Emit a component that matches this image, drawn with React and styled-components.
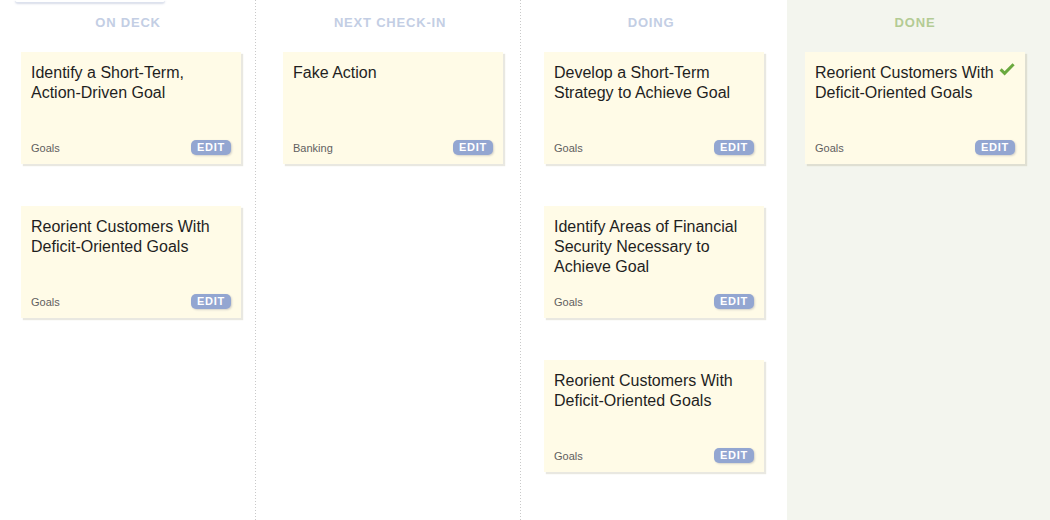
import React from "react";
import styled, { createGlobalStyle } from "styled-components";

const GlobalStyle = createGlobalStyle`
  html, body {
    margin: 0;
    padding: 0;
    background: #fff;
    font-family: "Liberation Sans", Arial, sans-serif;
  }
`;

const Board = styled.div`
  position: relative;
  display: grid;
  grid-template-columns: 256px 265px 266px 1fr;
  height: 100vh;
  min-height: 520px;
  overflow: hidden;
`;

// bottom edge of a control that sits just above the visible area
const TopStub = styled.div`
  position: absolute;
  top: 0;
  left: 15px;
  width: 150px;
  height: 2px;
  background: #fff;
  border-bottom: 1px solid #dde2ee;
  border-radius: 0 0 7px 7px;
  box-shadow: 0 1px 2px rgba(140, 155, 190, 0.35);
`;

const Column = styled.section`
  display: flex;
  flex-direction: column;
  padding-left: ${(p) => p.$inset}px;
  background-color: ${(p) => (p.$done ? "#f3f5ee" : "transparent")};

  ${(p) =>
    p.$divider &&
    `
    background-image: linear-gradient(#c9c9c9 34%, transparent 0);
    background-size: 1px 3px;
    background-position: right top;
    background-repeat: repeat-y;
  `}
`;

const Heading = styled.h3`
  width: ${(p) => (p.$done ? 220 : 214)}px;
  margin: 15px 0 21px;
  font-size: 13px;
  line-height: 16px;
  font-weight: 700;
  letter-spacing: 0.8px;
  text-align: center;
  color: ${(p) => (p.$done ? "#b3cb94" : "#c3cee4")};
`;

const CardList = styled.div`
  display: flex;
  flex-direction: column;
  gap: 42px;
`;

const Card = styled.article`
  box-sizing: border-box;
  width: 220px;
  height: 112px;
  padding: 11px 10px 9px;
  display: flex;
  flex-direction: column;
  justify-content: space-between;
  background: #fffbe7;
  box-shadow: 2px 2px 1px rgba(120, 110, 70, 0.16);
`;

const Title = styled.div`
  font-size: 16px;
  line-height: 20px;
  color: #1f1f1f;
`;

const Check = styled.svg`
  float: right;
  width: 16px;
  height: 14px;
  margin: -1px 0 0 4px;
`;

const Footer = styled.div`
  display: flex;
  align-items: center;
  justify-content: space-between;
`;

const Category = styled.span`
  font-size: 11px;
  color: #5f5f5f;
`;

const EditButton = styled.button`
  width: 40px;
  height: 15px;
  padding: 0;
  border: 0;
  border-radius: 5px;
  background: #93a6d1;
  color: #fff;
  font-family: "Liberation Sans", Arial, sans-serif;
  font-size: 11px;
  line-height: 15px;
  font-weight: 700;
  letter-spacing: 0.7px;
  box-shadow: 1px 1px 2px rgba(60, 70, 100, 0.22);
  cursor: pointer;
`;

const columns = [
  {
    name: "ON DECK",
    inset: 21,
    divider: true,
    cards: [
      { title: "Identify a Short-Term, Action-Driven Goal", tag: "Goals" },
      { title: "Reorient Customers With Deficit-Oriented Goals", tag: "Goals" },
    ],
  },
  {
    name: "NEXT CHECK-IN",
    inset: 27,
    divider: true,
    cards: [{ title: "Fake Action", tag: "Banking" }],
  },
  {
    name: "DOING",
    inset: 23,
    cards: [
      { title: "Develop a Short-Term Strategy to Achieve Goal", tag: "Goals" },
      {
        title: "Identify Areas of Financial Security Necessary to Achieve Goal",
        tag: "Goals",
      },
      { title: "Reorient Customers With Deficit-Oriented Goals", tag: "Goals" },
    ],
  },
  {
    name: "DONE",
    inset: 18,
    done: true,
    cards: [{ title: "Reorient Customers With Deficit-Oriented Goals", tag: "Goals" }],
  },
];

const CheckMark = () => (
  <Check viewBox="0 0 16 14" aria-hidden="true">
    <path
      d="M1.6 7.4 L5.6 11.4 L14.6 2.2"
      fill="none"
      stroke="#6aa93f"
      strokeWidth="3"
      strokeLinecap="butt"
      strokeLinejoin="miter"
    />
  </Check>
);

const ActionCard = ({ card, done }) => (
  <Card>
    <Title>
      {done && <CheckMark />}
      {card.title}
    </Title>
    <Footer>
      <Category>{card.tag}</Category>
      <EditButton type="button">EDIT</EditButton>
    </Footer>
  </Card>
);

const App = () => {
  return (
    <>
      <GlobalStyle />
      <Board>
        <TopStub />
        {columns.map((col) => (
          <Column
            key={col.name}
            $inset={col.inset}
            $divider={col.divider}
            $done={col.done}
          >
            <Heading $done={col.done}>{col.name}</Heading>
            <CardList>
              {col.cards.map((card, i) => (
                <ActionCard key={i} card={card} done={col.done} />
              ))}
            </CardList>
          </Column>
        ))}
      </Board>
    </>
  );
};

export default App;
